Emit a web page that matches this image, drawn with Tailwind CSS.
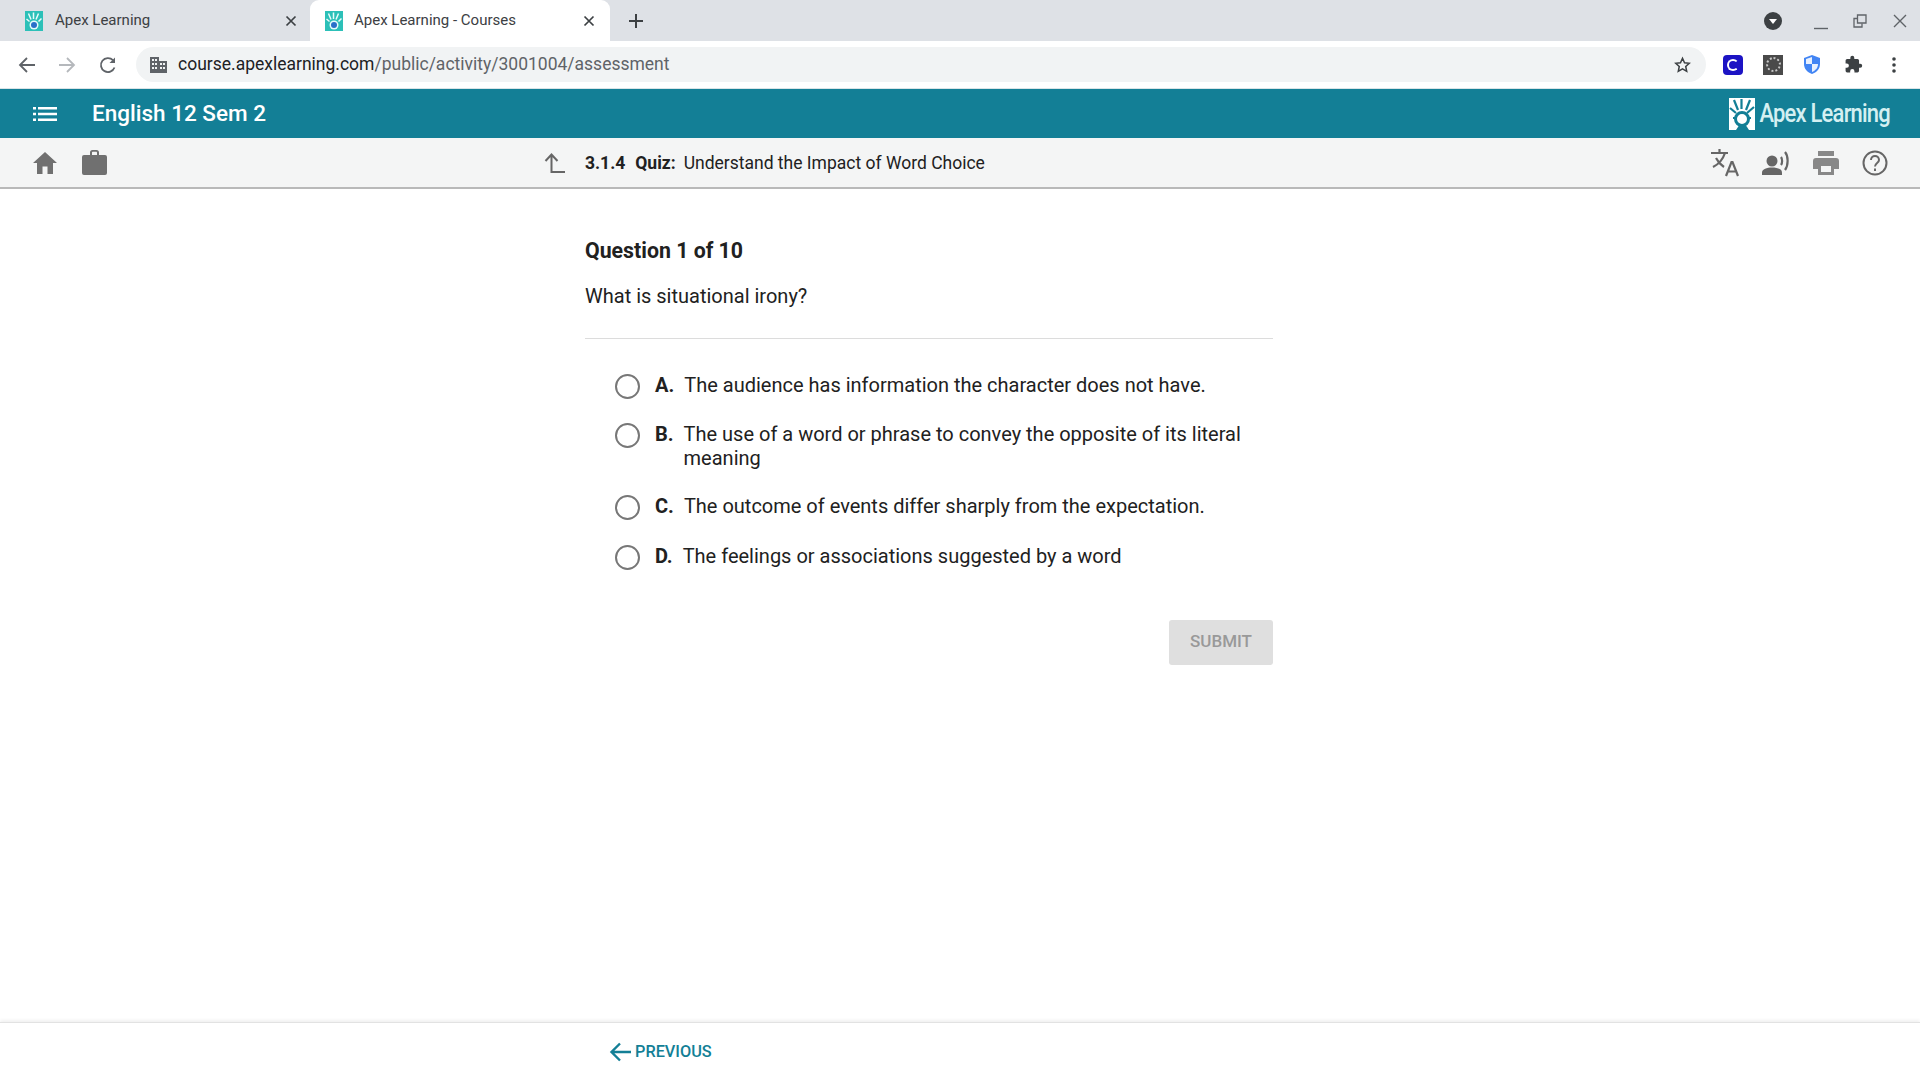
<!DOCTYPE html>
<html lang="en">
<head>
    <meta charset="UTF-8">
    <title>Apex Learning - Courses</title>
    <script src="https://cdn.jsdelivr.net/npm/@tailwindcss/browser@4"></script>
</head>
<body class="h-[1080px] w-[1920px] overflow-hidden bg-white font-['Roboto',sans-serif] text-[#212121] flex flex-col">

    <!-- Browser tabs -->
    <div class="h-[41px] shrink-0 bg-[#dee1e6] flex items-end pl-[8px] relative">
        <div class="w-[302px] h-[41px] flex items-center pl-[17px]">
            <svg class="w-[18px] h-[20px]" viewBox="0 0 18 20"><rect width="18" height="20" fill="#2cc0b8"/><path d="M3.500 2.500l2.500 6M8.500 1.500v6.500M13.500 2.500l-2.500 6M1.500 8l3 2.500M16.500 7.500l-3 3" stroke="#e8fbfa" stroke-width="1.500"/><circle cx="9" cy="14" r="4.500" fill="#e8fbfa"/><circle cx="9" cy="14" r="3" fill="#2a6fc9"/></svg>
            <span class="ml-[12px] text-[15px] text-[#3c4043]">Apex Learning</span>
            <svg class="w-[12px] h-[12px] ml-[135px]" viewBox="0 0 12 12"><path d="M1.500 1.500l9 9M10.500 1.500l-9 9" stroke="#3c4043" stroke-width="1.700"/></svg>
        </div>
        <div class="w-[300px] h-[41px] bg-white rounded-t-[9px] flex items-center pl-[15px]">
            <svg class="w-[18px] h-[20px]" viewBox="0 0 18 20"><rect width="18" height="20" fill="#2cc0b8"/><path d="M3.500 2.500l2.500 6M8.500 1.500v6.500M13.500 2.500l-2.500 6M1.500 8l3 2.500M16.500 7.500l-3 3" stroke="#e8fbfa" stroke-width="1.500"/><circle cx="9" cy="14" r="4.500" fill="#e8fbfa"/><circle cx="9" cy="14" r="3" fill="#2a6fc9"/></svg>
            <span class="ml-[11px] text-[15px] text-[#3c4043]">Apex Learning - Courses</span>
            <svg class="w-[12px] h-[12px] ml-[67px]" viewBox="0 0 12 12"><path d="M1.500 1.500l9 9M10.500 1.500l-9 9" stroke="#3c4043" stroke-width="1.700"/></svg>
        </div>
        <svg class="w-[16px] h-[16px] ml-[18px] mb-[12px]" viewBox="0 0 16 16"><path d="M8 1v14M1 8h14" stroke="#3c4043" stroke-width="2"/></svg>
        <div class="ml-auto h-[41px] flex items-center">
            <svg class="w-[18px] h-[18px]" viewBox="0 0 18 18"><circle cx="9" cy="9" r="9" fill="#3c4043"/><path d="M5 7h8l-4 5z" fill="#fff"/></svg>
            <svg class="w-[14px] h-[14px] ml-[32px] mt-[5px]" viewBox="0 0 14 14"><path d="M0 12.500h14" stroke="#5f6368" stroke-width="1.400"/></svg>
            <svg class="w-[14px] h-[14px] ml-[25px]" viewBox="0 0 14 14" fill="none" stroke="#5f6368" stroke-width="1.300"><path d="M4.500 1h8.500v8h-8.500z"/><path d="M4.500 4.500h-3.500v8.500h8v-3.500"/></svg>
            <svg class="w-[14px] h-[14px] ml-[26px] mr-[13px]" viewBox="0 0 14 14"><path d="M1 1l12 12M13 1l-12 12" stroke="#5f6368" stroke-width="1.400"/></svg>
        </div>
    </div>

    <!-- Browser toolbar -->
    <div class="h-[48px] shrink-0 bg-white flex items-center pl-[17px] border-b border-[#d9e4e7]">
        <svg class="w-[20px] h-[20px]" viewBox="0 0 20 20" fill="none" stroke="#5f6368" stroke-width="1.800"><path d="M18 10H3M10 3l-7 7 7 7"/></svg>
        <svg class="w-[20px] h-[20px] ml-[20px]" viewBox="0 0 20 20" fill="none" stroke="#b5b8bc" stroke-width="1.800"><path d="M2 10h15M10 3l7 7-7 7"/></svg>
        <svg class="w-[20px] h-[20px] ml-[21px]" viewBox="0 0 20 20" fill="none" stroke="#5f6368" stroke-width="1.800"><path d="M16.500 12.500A7 7 0 1 1 15 5.200"/><path d="M17 2.500v5.500h-5.500z" fill="#5f6368" stroke="none"/></svg>
        <div class="ml-[18px] w-[1570px] h-[35px] rounded-full bg-[#f1f3f4] flex items-center pl-[14px]">
            <svg class="w-[17px] h-[16px]" viewBox="0 0 17 16" fill="#5f6368"><path d="M0 0h9v4h8v12H0zM2 2v2h2V2zM5 2v2h2V2zM2 6v2h2V6zM5 6v2h2V6zM2 10v2h2v-2zM5 10v2h2v-2zM10 6v2h2V6zM13 6v2h2V6zM10 10v2h2v-2zM13 10v2h2v-2z" fill-rule="evenodd"/></svg>
            <span class="ml-[11px] text-[17.500px] text-[#202124]">course.apexlearning.com<span class="text-[#5f6368]">/public/activity/3001004/assessment</span></span>
            <svg class="w-[19px] h-[18px] ml-auto mr-[14px]" viewBox="0 0 24 24" fill="none" stroke="#3c4043" stroke-width="2"><path d="M12 3l2.700 6 6.300.700-4.700 4.300 1.300 6.500-5.600-3.300-5.600 3.300 1.300-6.500L3 9.700 9.300 9z"/></svg>
        </div>
        <div class="ml-[17px] w-[20px] h-[20px] rounded-[4px] bg-[#1c13c4] flex items-center justify-center">
            <div class="w-[12px] h-[12px] rounded-full border-[2.500px] border-white border-r-transparent"></div>
        </div>
        <div class="ml-[20px] w-[20px] h-[20px] bg-[#4a4a4a] flex items-center justify-center">
            <div class="w-[15px] h-[15px] rounded-full border-2 border-dotted border-[#c8c8c8]"></div>
        </div>
        <svg class="ml-[21px] w-[16px] h-[19px]" viewBox="0 0 16 19"><path d="M8 0l8 3v6c0 5-3.500 8.500-8 10-4.500-1.500-8-5-8-10V3z" fill="#4285f4"/><path d="M8 2v7H2V4zM8 9h6c0 4-2.500 6.500-6 8z" fill="#e8f0fe"/></svg>
        <svg class="ml-[24px] w-[19px] h-[19px]" viewBox="0 0 24 24" fill="#3c4043"><path d="M20.500 11H19V7a2 2 0 0 0-2-2h-4V3.500a2.500 2.500 0 0 0-5 0V5H4a2 2 0 0 0-2 2v3.800h1.500a2.700 2.700 0 0 1 0 5.400H2V20a2 2 0 0 0 2 2h3.800v-1.500a2.700 2.700 0 0 1 5.400 0V22H17a2 2 0 0 0 2-2v-4h1.500a2.500 2.500 0 0 0 0-5z"/></svg>
        <svg class="ml-[29px] w-[4px] h-[16px]" viewBox="0 0 4 16" fill="#3c4043"><circle cx="2" cy="2" r="1.800"/><circle cx="2" cy="8" r="1.800"/><circle cx="2" cy="14" r="1.800"/></svg>
    </div>

    <!-- Course bar -->
    <div class="h-[49px] shrink-0 bg-[#137f96] flex items-center pl-[33px] pr-[30px]">
        <svg class="w-[24px] h-[14px]" viewBox="0 0 24 14" fill="#fff"><path d="M0 0h3v2.500H0zM5 0h19v2.500H5zM0 5.700h3v2.500H0zM5 5.700h19v2.500H5zM0 11.500h3V14H0zM5 11.500h19V14H5z"/></svg>
        <span class="ml-[35px] text-[22.500px] font-medium text-white">English 12 Sem 2</span>
        <div class="ml-auto flex items-center">
            <svg class="w-[26px] h-[32px]" viewBox="0 0 26 32"><rect width="26" height="32" fill="#fff"/><path d="M5 2l4 10M12.500 1v10M21 2l-4 10M1 10l6 5M25 9l-7 6" stroke="#137f96" stroke-width="2.200"/><path d="M4 20h2M22 20h-2" stroke="#137f96" stroke-width="2"/><circle cx="13" cy="21" r="6.500" fill="#fff" stroke="#137f96" stroke-width="3"/><path d="M7 32l4-6h5l4 6z" fill="#137f96"/></svg>
            <span class="ml-[4px] text-[22px] font-medium leading-none text-[#d4f0f2] tracking-[-0.8px] scale-y-115">Apex Learning</span>
        </div>
    </div>

    <!-- Lesson bar -->
    <div class="h-[51px] shrink-0 bg-[#f4f5f5] border-b-2 border-[#b9b9b9] flex items-center pl-[33px] pr-[32px]">
        <svg class="w-[24px] h-[22px]" viewBox="0 0 24 22" fill="#707070"><path d="M9.500 22v-7.500h5V22h5.500V11H24L12 0 0 11h4v11z"/></svg>
        <svg class="w-[25px] h-[25px] ml-[25px]" viewBox="0 0 25 25" fill="#707070"><path d="M8 2.500A2.500 2.500 0 0 1 10.500 0h4A2.500 2.500 0 0 1 17 2.500V5h6a2 2 0 0 1 2 2v16a2 2 0 0 1-2 2H2a2 2 0 0 1-2-2V7a2 2 0 0 1 2-2h6zM10 2.500V5h5V2.500a.7.7 0 0 0-.7-.7h-3.600a.7.7 0 0 0-.7.700z" fill-rule="evenodd"/></svg>
        <svg class="w-[22px] h-[22px] ml-[437px]" viewBox="0 0 22 22" fill="none" stroke="#666" stroke-width="2"><path d="M7.500 21V3M1.500 9l6-6.500 6 6.500M7.500 20H21"/></svg>
        <span class="ml-[19px] pt-[1px] text-[17.500px] font-bold">3.1.4</span>
        <span class="ml-[10px] pt-[1px] text-[17.500px] font-bold">Quiz:</span>
        <span class="ml-[8px] pt-[1px] text-[17.500px]">Understand the Impact of Word Choice</span>
        <div class="ml-auto flex items-center gap-[23px]">
            <svg class="w-[28px] h-[28px]" viewBox="0 0 28 28" fill="none" stroke="#666" stroke-width="2.200"><path d="M0 4h17M8.500 0v4M14 4c-2 6-6 11-12 14M5 9c2 4 5 7 8 9"/><path d="M15 27l5.500-14h1L27 27M17 22.500h8.500"/></svg>
            <svg class="w-[28px] h-[24px]" viewBox="0 0 28 24" fill="#666"><circle cx="10" cy="10" r="5.500"/><path d="M0 24v-2.500c0-3.500 5-5 10-5s10 1.500 10 5V24z"/><path d="M19 6c1.500 2 1.500 6 0 8M23 1c3.500 4 3.500 13 0 18" fill="none" stroke="#666" stroke-width="2.200"/></svg>
            <svg class="w-[26px] h-[24px]" viewBox="0 0 26 24" fill="#888"><path d="M5 0h16v5H5zM3 7h20a3 3 0 0 1 3 3v8h-5v6H5v-6H0v-8a3 3 0 0 1 3-3zM8 15v6h10v-6z" fill-rule="evenodd"/></svg>
            <svg class="w-[26px] h-[26px]" viewBox="0 0 26 26" fill="none" stroke="#666" stroke-width="2"><circle cx="13" cy="13" r="11.500"/><path d="M9 10c0-5.500 8-5.500 8 0 0 3-4 3-4 6.500"/><path d="M13 18.500v2.500"/></svg>
        </div>
    </div>

    <!-- Quiz -->
    <main class="flex-1 pl-[585px]">
        <div class="w-[688px]">
            <h1 class="mt-[46px] text-[21.300px] leading-[32px] font-bold">Question 1 of 10</h1>
            <p class="mt-[15px] text-[20px] leading-[28px]">What is situational irony?</p>
            <div class="mt-[28px] border-t border-[#dcdcdc]"></div>
            <div class="mt-[34px] pl-[30px] text-[20px] leading-[24px] flex flex-col">
                <label class="flex items-start">
                    <span class="w-[25px] h-[25px] rounded-full border-2 border-[#777777] shrink-0 mt-[1px]"></span>
                    <b class="ml-[15px] font-bold">A.</b>
                    <span class="ml-[10px]">The audience has information the character does not have.</span>
                </label>
                <label class="flex items-start mt-[23px]">
                    <span class="w-[25px] h-[25px] rounded-full border-2 border-[#777777] shrink-0 mt-[1px]"></span>
                    <b class="ml-[15px] font-bold">B.</b>
                    <span class="ml-[10px] w-[570px]">The use of a word or phrase to convey the opposite of its literal meaning</span>
                </label>
                <label class="flex items-start mt-[24px]">
                    <span class="w-[25px] h-[25px] rounded-full border-2 border-[#777777] shrink-0 mt-[1px]"></span>
                    <b class="ml-[15px] font-bold">C.</b>
                    <span class="ml-[10px]">The outcome of events differ sharply from the expectation.</span>
                </label>
                <label class="flex items-start mt-[24px]">
                    <span class="w-[25px] h-[25px] rounded-full border-2 border-[#777777] shrink-0 mt-[1px]"></span>
                    <b class="ml-[15px] font-bold">D.</b>
                    <span class="ml-[10px]">The feelings or associations suggested by a word</span>
                </label>
            </div>
            <div class="mt-[50px] flex justify-end">
                <button class="w-[104px] h-[45px] pb-[2px] rounded-[3px] bg-[#dfdfdf] text-[17px] font-medium text-[#999999]">SUBMIT</button>
            </div>
        </div>
    </main>

    <!-- Footer -->
    <footer class="h-[58px] shrink-0 bg-white border-t border-[#e2e2e2] shadow-[0_-2px_3px_rgba(0,0,0,0.06)] flex items-center pl-[609px]">
        <svg class="w-[22px] h-[20px]" viewBox="0 0 22 20" fill="none" stroke="#137f96" stroke-width="2.400"><path d="M22 10H3M11 1.500L2.500 10l8.500 8.500"/></svg>
        <span class="ml-[4px] pt-[1px] text-[16.300px] font-medium text-[#137f96]">PREVIOUS</span>
    </footer>
</body>
</html>
